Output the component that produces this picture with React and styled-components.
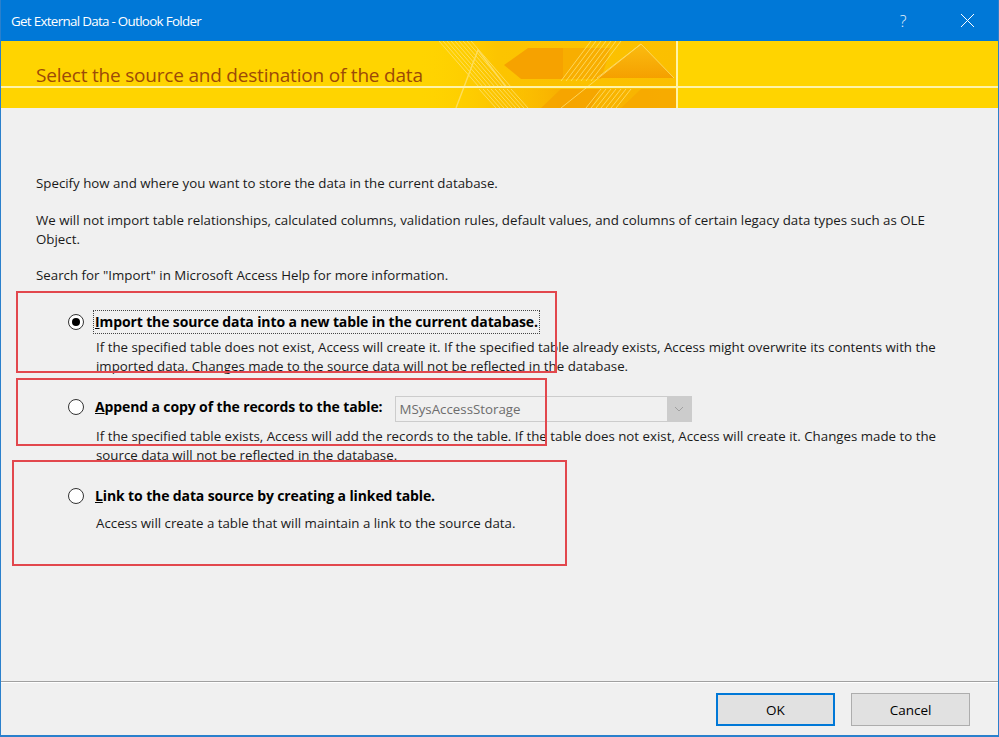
import React from "react";
import styled, { createGlobalStyle } from "styled-components";

const GlobalStyle = createGlobalStyle`
  html, body { margin: 0; padding: 0; background: #f0f0f0; }
  * { box-sizing: border-box; }
`;

const FONT = `"Open Sans", "Noto Sans", "Liberation Sans", sans-serif`;

const Window = styled.div`
  position: relative;
  width: 999px;
  height: 737px;
  display: flex;
  flex-direction: column;
  background: #f0f0f0;
  border-left: 1px solid #2a80cc;
  border-right: 1px solid #2a80cc;
  border-bottom: 2px solid #2a80cc;
  font-family: ${FONT};
  color: #1a1a1a;
  overflow: hidden;
`;

const TitleBar = styled.div`
  height: 41px;
  flex: none;
  background: #0078d7;
  display: flex;
  align-items: center;
  gap: 18px;
  padding: 0 8px 0 10px;
  color: #fff;
  font-size: 13.4px;
  letter-spacing: -0.7px;
`;

const TitleText = styled.div`
  flex: 1;
`;

const TitleButton = styled.div`
  width: 46px;
  height: 41px;
  display: flex;
  align-items: center;
  justify-content: center;
  color: #e8f2fb;
  font-size: 16px;
  font-weight: 300;
  letter-spacing: 0;
`;

const Banner = styled.div`
  position: relative;
  height: 67px;
  flex: none;
  background: #ffd400;
  overflow: hidden;
`;

const BannerArt = styled.svg`
  position: absolute;
  left: 0;
  top: 0;
  width: 997px;
  height: 67px;
`;

const BannerTitle = styled.div`
  position: relative;
  height: 46px;
  display: flex;
  align-items: flex-end;
  padding-left: 35px;
  color: #9c4a08;
  font-size: 19px;
  line-height: 24px;
  letter-spacing: -0.2px;
`;

const Content = styled.div`
  flex: 1;
  padding: 66px 36px 0 35px;
  font-size: 13.3px;
`;

const Para = styled.p`
  margin: 0 0 17.5px;
  line-height: 19px;
`;

const Option = styled.div`
  margin-top: ${(p) => p.top}px;
  padding-left: 32px;
`;

const OptionRow = styled.div`
  height: 26px;
  display: flex;
  align-items: center;
`;

const Radio = styled.span`
  width: 16px;
  height: 16px;
  border-radius: 50%;
  border: 1px solid #333;
  background: #fff;
  display: inline-flex;
  align-items: center;
  justify-content: center;
  flex: none;
  &::after {
    content: "";
    width: 8px;
    height: 8px;
    border-radius: 50%;
    background: ${(p) => (p.checked ? "#000" : "transparent")};
  }
`;

const Label = styled.span`
  margin-left: 9px;
  padding: 2px 1px;
  font-weight: 700;
  font-size: 14px;
  letter-spacing: -0.12px;
  color: #000;
  border: 1px dotted ${(p) => (p.focused ? "#444" : "transparent")};
  line-height: 18px;
  u { text-decoration: underline; }
`;

const Desc = styled.div`
  margin-top: ${(p) => p.gap}px;
  padding-left: 28px;
  line-height: 19px;
`;

const Combo = styled.div`
  margin-left: 11px;
  width: 297px;
  height: 26px;
  display: flex;
  border: 1px solid #cccccc;
  background: #f0f0f0;
  margin-top: 4px;
`;

const ComboText = styled.div`
  flex: 1;
  display: flex;
  align-items: center;
  padding-left: 3px;
  color: #6d6d6d;
`;

const ComboButton = styled.div`
  width: 24px;
  background: #cccccc;
  display: flex;
  align-items: center;
  justify-content: center;
`;

const Footer = styled.div`
  flex: none;
  height: 54px;
  border-top: 1px solid #a0a0a0;
  box-shadow: inset 0 1px 0 #fff;
  display: flex;
  justify-content: flex-end;
  align-items: flex-start;
  gap: 16px;
  padding: 11px 28px 0 0;
`;

const Button = styled.button`
  width: 119px;
  height: 33px;
  background: #e1e1e1;
  border: ${(p) => (p.primary ? "2px solid #0078d7" : "1px solid #adadad")};
  font-family: ${FONT};
  font-size: 13.5px;
  color: #000;
  padding: 0;
`;

const Annotation = styled.div`
  position: absolute;
  left: ${(p) => p.x}px;
  top: ${(p) => p.y}px;
  width: ${(p) => p.w}px;
  height: ${(p) => p.h}px;
  border: 2px solid #e2474d;
  pointer-events: none;
`;

function Art() {
  const hatch = [];
  for (let i = 0; i < 9; i++) {
    hatch.push(<path key={"h" + i} d={`M${438 + i * 4} 0 L${478 + i * 4} 46`} />);
    hatch.push(<path key={"hb" + i} d={`M${478 + i * 4} 48 L${495 + i * 4} 67`} />);
  }
  const rise = [];
  for (let i = 0; i < 7; i++) {
    rise.push(<path key={"r" + i} d={`M${560 + i * 5} 40 L${590 + i * 5} 0`} />);
    rise.push(<path key={"rb" + i} d={`M${585 + i * 5} 67 L${600 + i * 5} 48`} />);
  }
  return (
    <BannerArt viewBox="0 0 997 67">
      <defs>
        <linearGradient id="bg1" x1="0" y1="0" x2="1" y2="0">
          <stop offset="0" stopColor="#ffd000" stopOpacity="0" />
          <stop offset="0.3" stopColor="#fcc400" />
          <stop offset="1" stopColor="#fbbf00" />
        </linearGradient>
        <linearGradient id="tri" x1="0" y1="0" x2="0" y2="1">
          <stop offset="0" stopColor="#fbbc10" />
          <stop offset="1" stopColor="#f5a000" />
        </linearGradient>
        <linearGradient id="low" x1="0" y1="0" x2="1" y2="0">
          <stop offset="0" stopColor="#fcc000" stopOpacity="0" />
          <stop offset="0.35" stopColor="#f8b000" />
          <stop offset="1" stopColor="#f9b800" />
        </linearGradient>
      </defs>
      <rect x="420" y="0" width="256" height="67" fill="url(#bg1)" />
      <polygon points="503,24 527,7 562,7 562,38 520,38" fill="#f6a200" />
      <polygon points="562,7 610,7 600,38 562,38" fill="#f8ae00" />
      <polygon points="596,37 640,3 673,37" fill="url(#tri)" />
      <polygon points="495,67 505,48 676,48 676,67" fill="url(#low)" />
      <polygon points="540,67 560,48 600,48 590,67" fill="#f5a300" opacity="0.8" />
      <polygon points="620,67 640,48 676,48 676,67" fill="#f6a800" opacity="0.8" />
      <g stroke="#ffe47a" strokeWidth="1" opacity="0.75" fill="none">
        {hatch}
        {rise}
        <path d="M455 67 L477 9 L505 46" strokeWidth="1.4" />
        <path d="M596 37 L640 3 L673 37" />
        <path d="M560 67 L640 3" />
      </g>
      <rect x="0" y="45" width="997" height="2" fill="#fff3a8" />
      <rect x="675" y="0" width="2" height="67" fill="#fff3a8" />
    </BannerArt>
  );
}

export default function App() {
  return (
    <>
      <GlobalStyle />
      <Window>
        <TitleBar>
          <TitleText>Get External Data - Outlook Folder</TitleText>
          <TitleButton>?</TitleButton>
          <TitleButton>
            <svg width="15" height="15" viewBox="0 0 15 15">
              <path d="M1 1 L14 14 M14 1 L1 14" stroke="#fff" strokeWidth="1" />
            </svg>
          </TitleButton>
        </TitleBar>
        <Banner>
          <Art />
          <BannerTitle>Select the source and destination of the data</BannerTitle>
        </Banner>
        <Content>
          <Para>Specify how and where you want to store the data in the current database.</Para>
          <Para>
            We will not import table relationships, calculated columns, validation rules, default values, and columns of certain legacy data types such as OLE
            <br />
            Object.
          </Para>
          <Para>Search for "Import" in Microsoft Access Help for more information.</Para>

          <Option top={23.5}>
            <OptionRow>
              <Radio checked />
              <Label focused>
                <u>I</u>mport the source data into a new table in the current database.
              </Label>
            </OptionRow>
            <Desc gap={3}>
              If the specified table does not exist, Access will create it. If the specified table already exists, Access might overwrite its contents with the
              <br />
              imported data. Changes made to the source data will not be reflected in the database.
            </Desc>
          </Option>

          <Option top={18}>
            <OptionRow>
              <Radio />
              <Label>
                <u>A</u>ppend a copy of the records to the table:
              </Label>
              <Combo>
                <ComboText>MSysAccessStorage</ComboText>
                <ComboButton>
                  <svg width="10" height="6" viewBox="0 0 10 6">
                    <path d="M1 1 L5 5 L9 1" stroke="#a0a0a0" strokeWidth="1" fill="none" />
                  </svg>
                </ComboButton>
              </Combo>
            </OptionRow>
            <Desc gap={7}>
              If the specified table exists, Access will add the records to the table. If the table does not exist, Access will create it. Changes made to the
              <br />
              source data will not be reflected in the database.
            </Desc>
          </Option>

          <Option top={18}>
            <OptionRow>
              <Radio />
              <Label>
                <u>L</u>ink to the data source by creating a linked table.
              </Label>
            </OptionRow>
            <Desc gap={5}>Access will create a table that will maintain a link to the source data.</Desc>
          </Option>
        </Content>
        <Footer>
          <Button primary>OK</Button>
          <Button>Cancel</Button>
        </Footer>
        <Annotation x={15} y={291} w={541} h={82} />
        <Annotation x={15} y={378} w={531} h={68} />
        <Annotation x={11} y={460} w={555} h={106} />
      </Window>
    </>
  );
}
